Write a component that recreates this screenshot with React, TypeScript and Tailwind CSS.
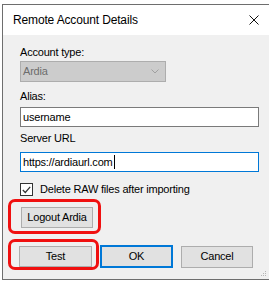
// Remote Account Details — Windows-style dialog with red annotation boxes
const font = "font-['Liberation_Sans',Arial,sans-serif] text-[11px] leading-[13px] tracking-[-0.2px]";
const body = `${font} text-black`;

function WinButton({ label, className = "" }: { label: string; className?: string }) {
  return (
    <div className={`flex items-center justify-center border bg-[#e1e1e1] ${className}`}>
      <span className={body}>{label}</span>
    </div>
  );
}

export default function App() {
  return (
    <div className="relative h-[289px] w-[279px] overflow-hidden bg-white">
      <div className="ml-[2px] mt-[4px] w-[267px] border-l border-t border-[#6e6e6e]">
        {/* title bar */}
        <div className="flex h-[30px] items-center justify-between bg-white pl-[10px] pr-[9px]">
          <span className="font-['Liberation_Sans',Arial,sans-serif] text-[12px] tracking-[-0.15px] text-black">
            Remote Account Details
          </span>
          <svg width="10" height="10" viewBox="0 0 10 10" className="mr-[1px]">
            <path d="M0.5 0.5 L9.5 9.5 M9.5 0.5 L0.5 9.5" stroke="#111" strokeWidth="1" />
          </svg>
        </div>

        {/* client area */}
        <div className="relative flex h-[244px] flex-col bg-[#f0f0f0] pl-[17px] pt-[11px]">
          <span className={body}>Account type:</span>
          <div className="mt-[2px] flex h-[21px] w-[146px] items-center justify-between border border-[#adadad] bg-[#cccccc] pl-[2px] pr-[6px]">
            <span className={`${font} text-[#6d6d6d]`}>Ardia</span>
            <svg width="8" height="5" viewBox="0 0 8 5">
              <path d="M0.5 0.5 L4 4 L7.5 0.5" fill="none" stroke="#a0a0a0" strokeWidth="1" />
            </svg>
          </div>

          <span className={`${body} mt-[8px]`}>Alias:</span>
          <div className="mt-[4px] flex h-[20px] w-[239px] items-center border border-[#7a7a7a] bg-white pl-[2px]">
            <span className={body}>username</span>
          </div>

          <span className={`${body} mt-[5px]`}>Server URL</span>
          <div className="mt-[7px] flex h-[20px] w-[239px] items-center border border-[#0078d7] bg-white pl-[2px]">
            <span className={body}>https://ardiaurl.com</span>
            <span className="ml-[1px] h-[14px] w-[1px] bg-black" />
          </div>

          <label className="mt-[11px] flex h-[13px] items-center gap-[7px]">
            <span className="flex h-[13px] w-[13px] items-center justify-center border border-[#333] bg-white">
              <svg width="9" height="8" viewBox="0 0 9 8">
                <path d="M0.8 4 L3.3 6.5 L8.2 0.8" fill="none" stroke="#333" strokeWidth="1.2" />
              </svg>
            </span>
            <span className={body}>Delete RAW files after importing</span>
          </label>

          <WinButton label="Logout Ardia" className="ml-[1px] mt-[11px] h-[21px] w-[72px] border-[#adadad]" />

          <div className="mt-[17px] flex items-center">
            <WinButton label="Test" className="ml-[-1px] h-[21px] w-[73px] border-[#adadad]" />
            <WinButton label="OK" className="ml-[8px] h-[23px] w-[73px] border-2 border-[#0078d7]" />
            <WinButton label="Cancel" className="ml-[8px] h-[22px] w-[72px] border-[#adadad]" />
          </div>

          {/* red annotation boxes */}
          <div className="absolute left-[5px] top-[164px] h-[35px] w-[93px] rounded-[7px] border-[3px] border-[#f01010]" />
          <div className="absolute left-[5px] top-[204px] h-[31px] w-[91px] rounded-[7px] border-[3px] border-[#f01010]" />

          {/* resize grip */}
          <svg width="6" height="6" viewBox="0 0 6 6" className="absolute bottom-[2px] right-[2px]">
            <rect x="4" y="0" width="1" height="1" fill="#b5b5b5" />
            <rect x="2" y="2" width="1" height="1" fill="#b5b5b5" />
            <rect x="4" y="2" width="1" height="1" fill="#b5b5b5" />
            <rect x="0" y="4" width="1" height="1" fill="#b5b5b5" />
            <rect x="2" y="4" width="1" height="1" fill="#b5b5b5" />
            <rect x="4" y="4" width="1" height="1" fill="#b5b5b5" />
          </svg>
        </div>
        <div className="h-[1px] bg-[#6e6e6e]" />
      </div>
    </div>
  );
}
